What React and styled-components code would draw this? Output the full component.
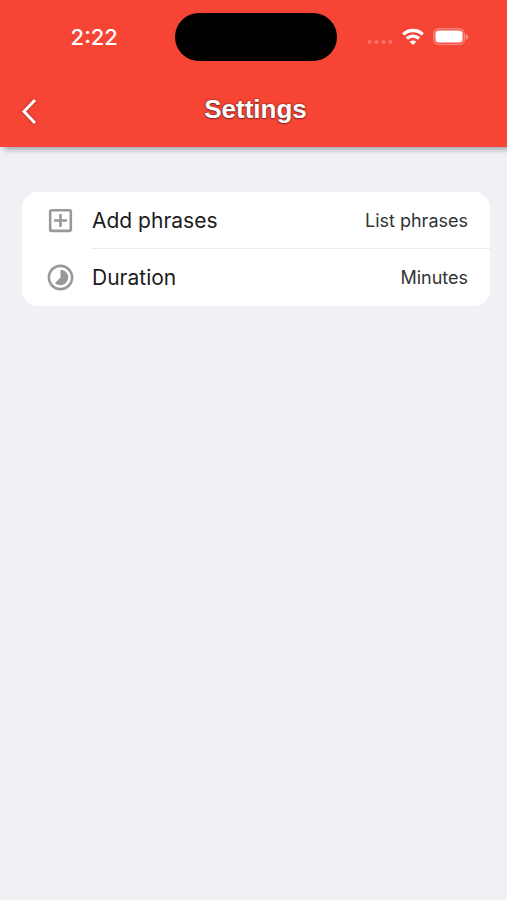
import React from 'react';
import styled, { createGlobalStyle } from 'styled-components';
import { MdTimelapse, MdOutlineAddBox } from 'react-icons/md';

const GlobalStyle = createGlobalStyle`
  * {
    box-sizing: border-box;
  }

  body {
    margin: 0;
    background-color: #f1f0f5;
    font-family: Inter, 'Liberation Sans', sans-serif;
    overflow-x: hidden;
  }
`;

const Header = styled.header`
  padding-left: 4px;
  background-color: #f64435;
  color: #fff;
  box-shadow: 4px 2px 6px rgba(60, 60, 80, 0.5);
`;

const StatusBar = styled.div`
  display: grid;
  grid-template-columns: 1fr 162px 1fr;
  align-items: center;
  height: 74px;
`;

const Clock = styled.time`
  padding-left: 10px;
  text-align: center;
  font-size: 22px;
  font-weight: 500;
`;

const Island = styled.div`
  height: 48px;
  border-radius: 24px;
  background-color: #000;
`;

const StatusIcons = styled.div`
  display: flex;
  align-items: center;
  justify-content: flex-end;
  gap: 9px;
  padding-right: 38px;
`;

const TitleBar = styled.div`
  display: grid;
  grid-template-columns: 52px 1fr 52px;
  align-items: center;
  height: 73px;
`;

const BackButton = styled.button`
  display: flex;
  align-items: center;
  justify-content: center;
  height: 60px;
  padding: 0;
  border: none;
  background: none;
  color: #fff;
  cursor: pointer;
  filter: drop-shadow(0 0 1px rgba(60, 30, 30, 0.6));
`;

const Title = styled.h1`
  margin: 0;
  padding-bottom: 4px;
  text-align: center;
  font-family: 'Liberation Sans', sans-serif;
  font-size: 26px;
  font-weight: 700;
  line-height: 32px;
  text-shadow: 0 0 2px rgba(50, 20, 20, 0.9), 0 1px 1px rgba(50, 20, 20, 0.4);
`;

const List = styled.ul`
  margin: 45px 17px 0 22px;
  padding: 0;
  list-style: none;
  border-radius: 16px;
  background-color: #fff;
  overflow: hidden;
`;

const Row = styled.li`
  display: flex;
  align-items: center;
  padding-left: 23px;
  color: #999;
`;

const RowBody = styled.div`
  display: flex;
  flex: 1;
  align-items: center;
  justify-content: space-between;
  height: 57px;
  margin-left: 16px;
  padding-right: 22px;
  border-bottom: ${({ $last }) => ($last ? 'none' : '1px solid #ececee')};
`;

const Label = styled.span`
  color: #1c1c1c;
  font-size: 21px;
`;

const Value = styled.span`
  color: #333;
  font-size: 18px;
`;

const SignalIcon = () => (
  <svg width="26" height="18" viewBox="0 0 26 18" fill="#fff" fillOpacity="0.25" aria-hidden="true">
    <circle cx="2.5" cy="14" r="2.1" />
    <circle cx="9.5" cy="14" r="2.1" />
    <circle cx="16.5" cy="14" r="2.1" />
    <circle cx="23.5" cy="14" r="2.1" />
  </svg>
);

const WifiIcon = () => (
  <svg width="22" height="18" viewBox="0 0 22 18" fill="none" stroke="#fff" strokeWidth="3.3" aria-hidden="true">
    <path d="M1.2 6.4C6.8 1.2 15.2 1.2 20.8 6.4" />
    <path d="M4.9 10.5C8.4 7.3 13.6 7.3 17.1 10.5" />
    <path d="M11 17 7.7 13.7C9.5 12 12.5 12 14.3 13.7Z" fill="#fff" stroke="none" />
  </svg>
);

const BatteryIcon = () => (
  <svg width="36" height="18" viewBox="0 0 36 18" fill="#fff" aria-hidden="true">
    <rect x="0.8" y="0.8" width="30.4" height="15.6" rx="5" fill="none" stroke="#fff" strokeOpacity="0.35" strokeWidth="1.4" />
    <rect x="2.4" y="2.6" width="27.2" height="12" rx="3.5" />
    <path d="M32.6 6C36 7 36 11 32.6 12Z" fillOpacity="0.4" />
  </svg>
);

const rows = [
  { icon: MdOutlineAddBox, label: 'Add phrases', value: 'List phrases' },
  { icon: MdTimelapse, label: 'Duration', value: 'Minutes' },
];

const App = () => (
  <>
    <GlobalStyle />
    <Header>
      <StatusBar>
        <Clock>2:22</Clock>
        <Island />
        <StatusIcons>
          <SignalIcon />
          <WifiIcon />
          <BatteryIcon />
        </StatusIcons>
      </StatusBar>
      <TitleBar>
        <BackButton aria-label="Back">
          <svg width="18" height="28" viewBox="0 0 18 28" fill="none" stroke="currentColor" strokeWidth="3">
            <path d="M14 3 3 14.5 14 26" />
          </svg>
        </BackButton>
        <Title>Settings</Title>
      </TitleBar>
    </Header>
    <List>
      {rows.map(({ icon: Icon, label, value }, index) => (
        <Row key={label}>
          <Icon size={31} />
          <RowBody $last={index === rows.length - 1}>
            <Label>{label}</Label>
            <Value>{value}</Value>
          </RowBody>
        </Row>
      ))}
    </List>
  </>
);

export default App;
